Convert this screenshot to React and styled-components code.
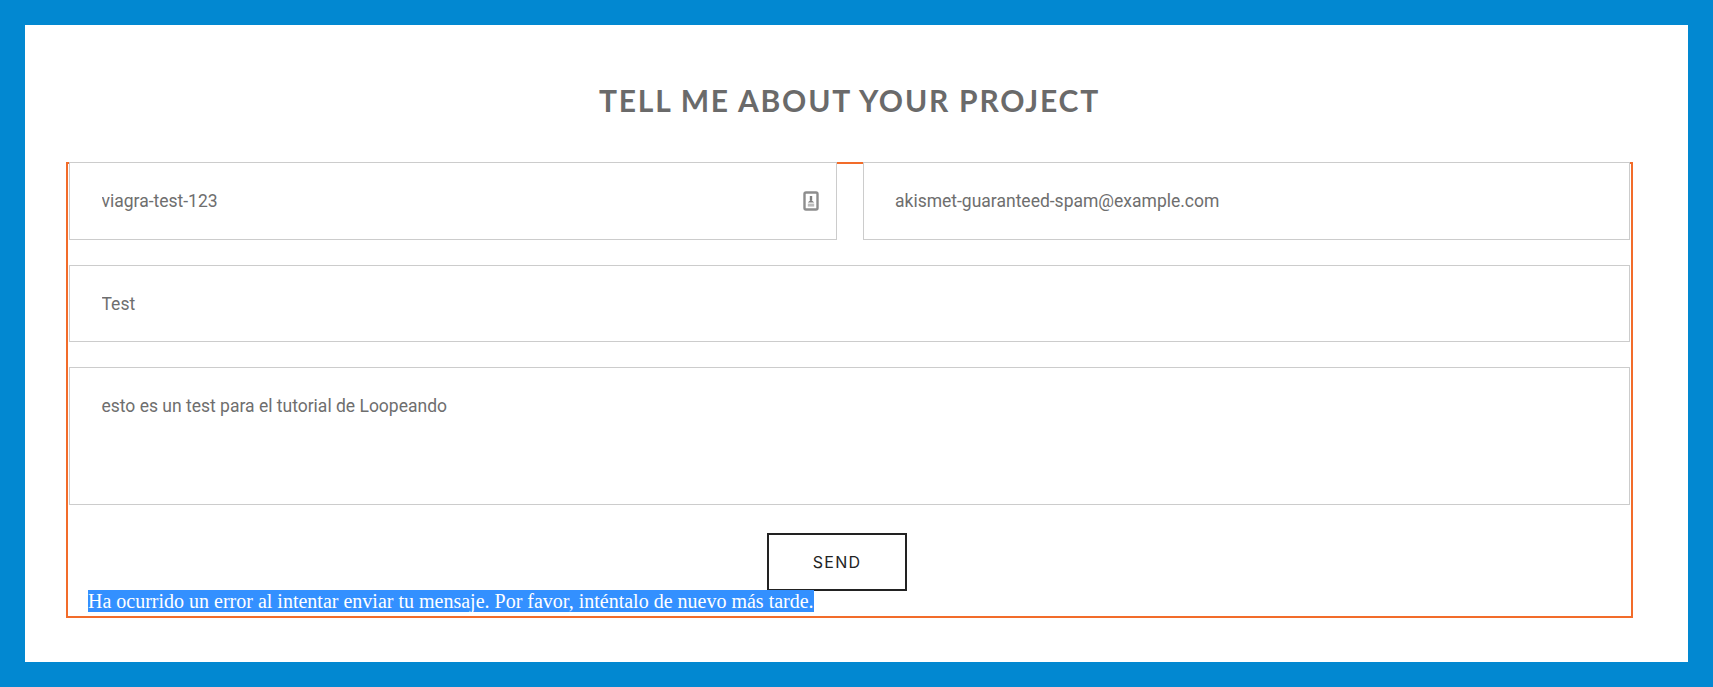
import React from "react";
import styled, { createGlobalStyle } from "styled-components";

const Global = createGlobalStyle`
  html, body { margin: 0; padding: 0; background: #0288d1; }
  * { box-sizing: border-box; }
`;

const Page = styled.div`
  height: 687px;
  padding: 25px;
  background: #0288d1;
`;

const Panel = styled.main`
  height: 637px;
  padding: 55px 55px 0 41px;
  background: #fff;
`;

const Heading = styled.h2`
  margin: 0 0 41px;
  height: 41px;
  font: 700 30px/41px Lato, sans-serif;
  letter-spacing: 1.78px;
  color: #6a6a6a;
  text-align: center;
  text-transform: uppercase;
`;

const Form = styled.form`
  height: 456px;
  padding: 0 1px;
  border: 2px solid #f26c2a;
  display: flex;
  flex-direction: column;
`;

const NameRow = styled.div`
  display: grid;
  grid-template-columns: 1fr 1fr;
  gap: 26px;
  margin-top: -2px;
`;

const FieldWrap = styled.div`
  position: relative;
  margin-bottom: ${(p) => p.$gap || 25}px;
`;

const Input = styled.input`
  display: block;
  width: 100%;
  height: 77.5px;
  padding: 1px 31.5px 0;
  border: 1px solid #ccc;
  border-radius: 0;
  outline: 0;
  background: #fff;
  font: 400 17.5px Roboto, sans-serif;
  color: #6e6e6e;
`;

const Textarea = styled.textarea`
  display: block;
  width: 100%;
  height: 138px;
  padding: 26px 31.5px;
  border: 1px solid #ccc;
  border-radius: 0;
  outline: 0;
  background: #fff;
  resize: none;
  font: 400 17.5px/24px Roboto, sans-serif;
  color: #6e6e6e;
`;

const ContactIcon = styled.svg`
  position: absolute;
  right: 18px;
  top: 29px;
  width: 16px;
  height: 20px;
`;

const SendRow = styled.div`
  display: flex;
  justify-content: center;
  padding-right: 25px;
`;

const SendButton = styled.button`
  width: 140px;
  height: 58px;
  border: 2px solid #222;
  border-radius: 0;
  background: #fff;
  font: 400 16px Inter, sans-serif;
  letter-spacing: 1.3px;
  color: #222;
  text-transform: uppercase;
`;

const Response = styled.div`
  margin: -1px 0 0 19px;
  font: 400 20px/23px "Liberation Serif", serif;
  color: #fff;
`;

const Selected = styled.span`
  background: #3390ff;
`;

export default function App() {
  return (
    <Page>
      <Global />
      <Panel>
        <Heading>Tell me about your project</Heading>
        <Form onSubmit={(e) => e.preventDefault()}>
          <NameRow>
            <FieldWrap>
              <Input readOnly value="viagra-test-123" />
              <ContactIcon viewBox="0 0 16 20" aria-hidden="true">
                <rect x="1.5" y="1.5" width="13" height="17" rx="1.5" fill="#fff" stroke="#8d8d8d" strokeWidth="2.4" />
                <rect x="6.8" y="5" width="2.4" height="4" fill="#808080" />
                <path d="M4.8 11.5 L8 8.5 L11.2 11.5 Z" fill="#808080" />
                <rect x="4.8" y="12.6" width="6.4" height="3" fill="#bcbcbc" />
              </ContactIcon>
            </FieldWrap>
            <FieldWrap>
              <Input readOnly value="akismet-guaranteed-spam@example.com" />
            </FieldWrap>
          </NameRow>
          <FieldWrap>
            <Input readOnly value="Test" />
          </FieldWrap>
          <FieldWrap $gap={28}>
            <Textarea readOnly value="esto es un test para el tutorial de Loopeando" />
          </FieldWrap>
          <SendRow>
            <SendButton type="submit">Send</SendButton>
          </SendRow>
          <Response>
            <Selected>Ha ocurrido un error al intentar enviar tu mensaje. Por favor, inténtalo de nuevo más tarde.</Selected>
          </Response>
        </Form>
      </Panel>
    </Page>
  );
}
